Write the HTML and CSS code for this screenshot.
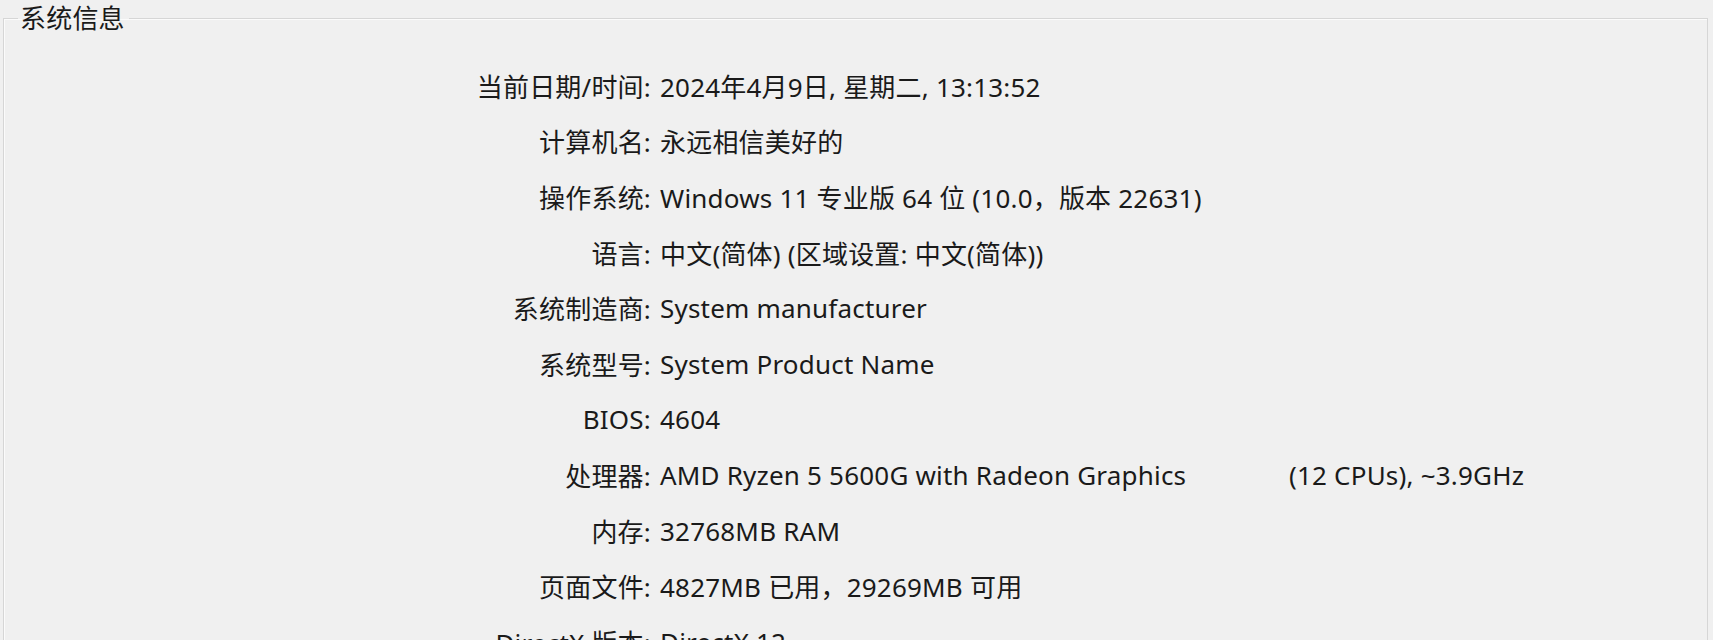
FILE: index.html
```html
<!DOCTYPE html>
<html lang="zh-CN">
<head>
  <meta charset="UTF-8">
  <meta name="viewport" content="width=device-width, initial-scale=1.0">
  <title>系统信息</title>
  <link rel="stylesheet" href="styles.css">
</head>
<body>
  <fieldset class="group">
    <legend>系统信息</legend>
    <dl class="info">
      <dt>当前日期/时间:</dt><dd>2024年4月9日, 星期二, 13:13:52</dd>
      <dt>计算机名:</dt><dd>永远相信美好的</dd>
      <dt>操作系统:</dt><dd>Windows 11 专业版 64 位 (10.0，版本 22631)</dd>
      <dt>语言:</dt><dd>中文(简体) (区域设置: 中文(简体))</dd>
      <dt>系统制造商:</dt><dd>System manufacturer</dd>
      <dt>系统型号:</dt><dd>System Product Name</dd>
      <dt>BIOS:</dt><dd>4604</dd>
      <dt>处理器:</dt><dd><span class="cpu">AMD Ryzen 5 5600G with Radeon Graphics</span>(12 CPUs), ~3.9GHz</dd>
      <dt>内存:</dt><dd>32768MB RAM</dd>
      <dt>页面文件:</dt><dd>4827MB 已用，29269MB 可用</dd>
      <dt>DirectX 版本:</dt><dd>DirectX 12</dd>
    </dl>
  </fieldset>
</body>
</html>
```

FILE: styles.css
```css
body {
  margin: 0;
  padding: 0;
  background-color: #f0f0f0;
  color: #1a1a1a;
  font-family: "Noto Sans", "Noto Sans CJK SC", sans-serif;
  font-size: 26px;
  letter-spacing: 0.2px;
  overflow: hidden;
  height: 640px;
}
.group {
  margin: 3px 5px 0 3px;
  padding: 0;
  border: 1px solid #d6d6d6;
  box-shadow: inset 1px 1px 0 #fbfbfb;
  height: 700px;
}
.group legend {
  margin-left: 14px;
  padding: 0 4px 0 2px;
  font-size: 26px;
  line-height: 30px;
}
.info {
  display: grid;
  grid-template-columns: 647px 1fr;
  grid-auto-rows: 55.6px;
  align-items: center;
  margin: 25px 0 0 0;
}
.info dt {
  text-align: right;
  white-space: nowrap;
}
.info dd {
  margin: 0 0 0 9px;
  white-space: nowrap;
}
.cpu {
  display: inline-block;
  min-width: 629px;
}
```
